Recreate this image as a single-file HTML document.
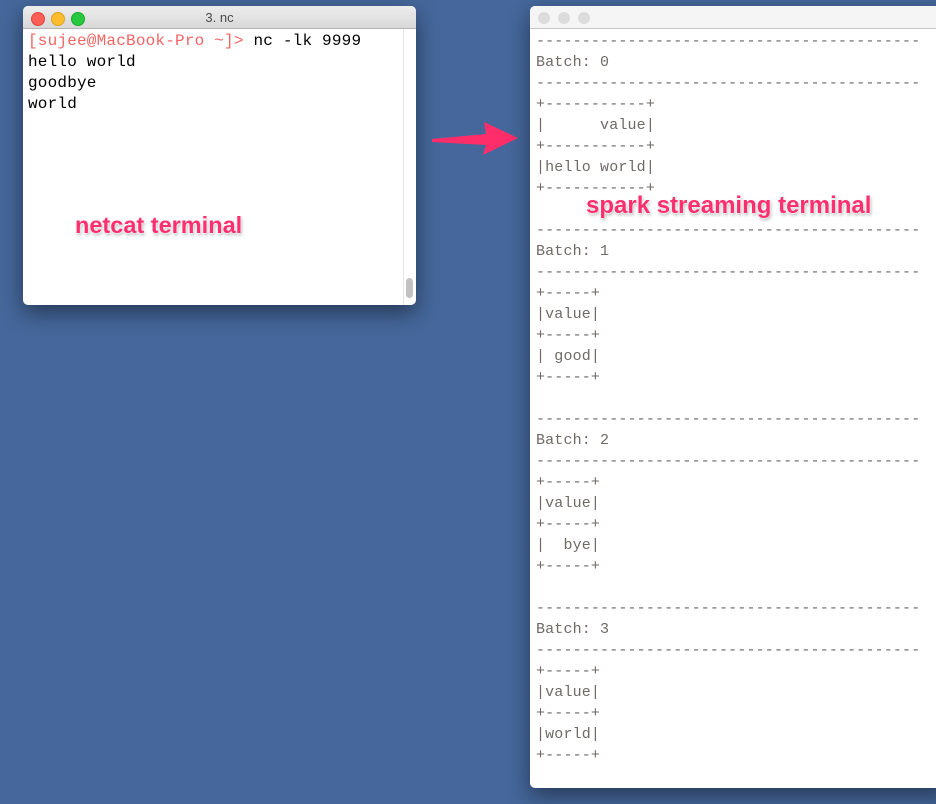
<!DOCTYPE html>
<html><head><meta charset="utf-8"><style>
html,body{margin:0;padding:0}
body{width:936px;height:804px;background:#45679b;position:relative;overflow:hidden;font-family:"Liberation Sans",sans-serif}
.win{position:absolute;background:#fff;border-radius:5px;box-shadow:0 8px 22px rgba(0,0,0,.45);overflow:hidden}
.tb{height:22px;background:linear-gradient(#ededed,#d8d8d8);border-bottom:1px solid #b4b4b4;position:relative}
.dot{position:absolute;top:6px;width:12px;height:12px;border-radius:50%}
.mono{font-family:"Liberation Mono",monospace;white-space:pre;position:absolute}
.lab{position:absolute;font-weight:bold;color:#ff2e6e;text-shadow:0 0 2px #fff,0 0 2px #fff,1px 2px 3px rgba(0,0,0,.35);white-space:nowrap}
</style></head><body>
<div class="win" style="left:23px;top:6px;width:393px;height:299px">
 <div class="tb">
  <div class="dot" style="left:8px;background:#fc5f57;border:0.5px solid #e0443e"></div>
  <div class="dot" style="left:28px;background:#fdbc2e;border:0.5px solid #dea123"></div>
  <div class="dot" style="left:48px;background:#28c840;border:0.5px solid #1aab29"></div>
  <div style="position:absolute;left:0;right:0;top:4px;text-align:center;font-size:13px;color:#4a4a4a">3. nc</div>
 </div>
 <div style="position:absolute;left:380px;top:23px;width:1px;bottom:0;background:#e6e6e6"></div>
 <div style="position:absolute;left:383px;top:272px;width:7px;height:20px;border-radius:4px;background:#c2c2c2"></div>
 <div class="mono" style="left:5px;top:25px;font-size:16px;line-height:21px;letter-spacing:0.2px;color:#000"><span style="color:#f36464">[sujee@MacBook-Pro ~]&gt;</span> nc -lk 9999
hello world
goodbye
world</div>
</div>
<svg style="position:absolute;left:0;top:0" width="936" height="804"><polygon points="432,139 486,134 484,122 518,138 483,155 486,145 432,142" fill="#ff2d6a"/></svg>
<div class="win" style="left:530px;top:6px;width:420px;height:782px;border-radius:5px">
 <div class="tb" style="background:#f5f5f5;border-bottom:1px solid #c8c8c8">
  <div class="dot" style="left:8px;background:#dcdcdc"></div>
  <div class="dot" style="left:28px;background:#dcdcdc"></div>
  <div class="dot" style="left:48px;background:#dcdcdc"></div>
 </div>
 <div class="mono" style="left:6px;top:25px;font-size:15px;line-height:21px;letter-spacing:0.15px;color:#6e6a66">------------------------------------------
Batch: 0
------------------------------------------
+-----------+
|      value|
+-----------+
|hello world|
+-----------+

------------------------------------------
Batch: 1
------------------------------------------
+-----+
|value|
+-----+
| good|
+-----+

------------------------------------------
Batch: 2
------------------------------------------
+-----+
|value|
+-----+
|  bye|
+-----+

------------------------------------------
Batch: 3
------------------------------------------
+-----+
|value|
+-----+
|world|
+-----+</div>
</div>
<div class="lab" style="left:75px;top:212px;font-size:23.5px">netcat terminal</div>
<div class="lab" style="left:586px;top:192px;font-size:24px">spark streaming terminal</div>
</body></html>
